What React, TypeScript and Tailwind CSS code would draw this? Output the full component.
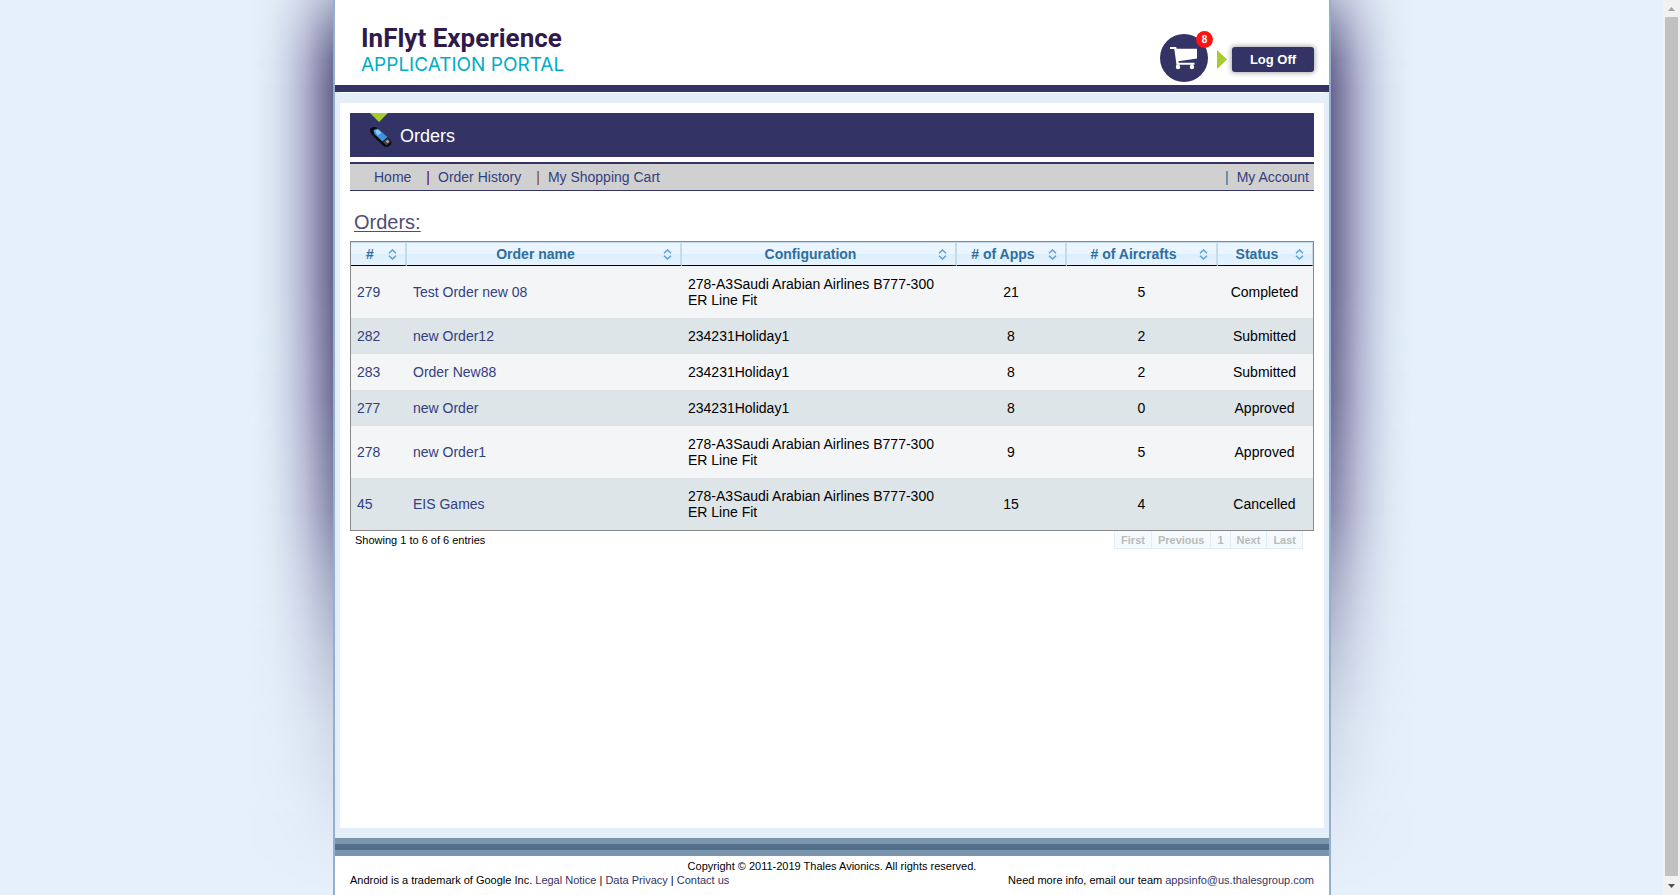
import React from "react";

type Order = { id: string; name: string; config: string; apps: number; aircrafts: number; status: string };

const LONG = "278-A3Saudi Arabian Airlines B777-300 ER Line Fit";
const SHORT = "234231Holiday1";

const orders: Order[] = [
  { id: "279", name: "Test Order new 08", config: LONG, apps: 21, aircrafts: 5, status: "Completed" },
  { id: "282", name: "new Order12", config: SHORT, apps: 8, aircrafts: 2, status: "Submitted" },
  { id: "283", name: "Order New88", config: SHORT, apps: 8, aircrafts: 2, status: "Submitted" },
  { id: "277", name: "new Order", config: SHORT, apps: 8, aircrafts: 0, status: "Approved" },
  { id: "278", name: "new Order1", config: LONG, apps: 9, aircrafts: 5, status: "Approved" },
  { id: "45", name: "EIS Games", config: LONG, apps: 15, aircrafts: 4, status: "Cancelled" },
];

const columns = [
  { label: "#", width: "w-[56px]" },
  { label: "Order name", width: "" },
  { label: "Configuration", width: "" },
  { label: "# of Apps", width: "w-[110px]" },
  { label: "# of Aircrafts", width: "w-[151px]" },
  { label: "Status", width: "w-[95px]" },
];

function SortIcon() {
  return (
    <svg width="9" height="11" viewBox="0 0 9 11" fill="none" stroke="#5d9fd6" strokeWidth="1.5" aria-hidden="true">
      <path d="M1 4.2 4.5 1 8 4.2M1 6.8 4.5 10 8 6.8" />
    </svg>
  );
}

function CartIcon() {
  return (
    <svg width="28" height="24" viewBox="0 0 28 24" aria-hidden="true">
      <path d="M0 1H6.200L6.700 2.800H27V12.600L8.300 15.200L8.700 16.800H24.500V18.800H6.500L4.300 3H0Z" fill="#fff" />
      <path d="M6.500 18.500H9V20H6.500ZM20.500 18.500H23V20H20.500Z" fill="#fff" />
      <circle cx="8" cy="21" r="2.200" fill="#fff" />
      <circle cx="22" cy="21" r="2.200" fill="#fff" />
    </svg>
  );
}

function PhoneIcon() {
  return (
    <svg className="mt-[2px]" width="24" height="22" viewBox="0 0 24 22" aria-hidden="true">
      <path d="M1 3.500Q1 1 6 1L9 2 22.500 15.500Q23 19 18 21L15 20.500 2 8Z" fill="#0b0b12" />
      <path d="M4.500 4 9 2.500 18.500 11 13.500 15.500 5.500 8Z" fill="#3f93dc" />
      <path d="M6 4.500 9 3.800 12.500 7 8.500 9.500Z" fill="#8accff" />
      <path d="M14 16 18.500 12 21.500 15.800 17.500 19.500Z" fill="#44444c" />
      <circle cx="18.500" cy="15.500" r="1.300" fill="#b9b9c0" />
    </svg>
  );
}

function Glow({ side }: { side: string }) {
  return (
    <div
      aria-hidden="true"
      className={
        side +
        " absolute top-0 h-[895px] w-[82px] [mask-image:linear-gradient(to_bottom,rgba(0,0,0,.42)_0,rgba(0,0,0,.7)_30px,rgba(0,0,0,.92)_60px,black_90px,black_280px,rgba(0,0,0,.92)_400px,rgba(0,0,0,.74)_510px,rgba(0,0,0,.5)_580px,rgba(0,0,0,.32)_650px,rgba(0,0,0,.17)_720px,rgba(0,0,0,.05)_820px,transparent_890px)]"
      }
    />
  );
}

export default function App() {
  return (
    <div className="flex h-screen overflow-hidden bg-[#e5f0fa] font-['Liberation_Sans',Arial,sans-serif] text-black">
      <div className="flex min-w-0 flex-1 justify-center pl-px">
        <div className="relative flex w-full max-w-[998px] flex-col">
          <Glow side="right-full bg-[linear-gradient(to_left,#67668f_0,#8b8aae_14px,#afb0cd_28px,#c8d0e4_44px,#dae5f1_60px,#e5f0fa_82px)]" />
          <Glow side="left-full bg-[linear-gradient(to_right,#67668f_0,#8b8aae_14px,#afb0cd_28px,#c8d0e4_44px,#dae5f1_60px,#e5f0fa_82px)]" />
          <div className="flex flex-1 flex-col border-x-2 border-[#92afce] bg-[#e4eef9]">
            <header className="flex h-[92px] justify-between border-b-[7px] border-[#333366] bg-white pr-[15px] pl-[26px]">
              <div className="pt-[23px] whitespace-nowrap">
                <div className="font-[Roboto,sans-serif] text-[26px] leading-[30px] font-bold text-[#2f1a4a]">InFlyt Experience</div>
                <div className="font-[Inter,sans-serif] text-[19px] leading-[24px] font-normal text-[#00adc6]">APPLICATION PORTAL</div>
              </div>
              <div className="flex items-start pt-[34px]">
                <a href="#cart" aria-label="Shopping cart" className="relative flex size-12 items-center justify-center rounded-full bg-[#333366]">
                  <CartIcon />
                  <span className="absolute -top-[3px] -right-[5px] flex size-[17px] items-center justify-center rounded-full bg-[#ff1414] text-[10px] font-bold text-white">8</span>
                </a>
                <svg className="mt-4 ml-[9px]" width="10" height="19" viewBox="0 0 10 19" aria-hidden="true">
                  <path d="M0 0 10 9.500 0 19Z" fill="#a5cb2c" />
                </svg>
                <button className="mt-[13px] ml-[5px] h-[25px] w-[82px] rounded-[3px] bg-[#333366] text-[13px] font-bold text-white shadow-[0_0_5px_1px_#aaa]">Log Off</button>
              </div>
            </header>

            <div className="mx-[5px] h-px bg-white" />
            <main className="mx-[5px] mt-[10px] mb-[10px] flex-1 bg-white px-[10px] pt-[10px]">
              <div className="relative flex h-[44px] items-center bg-[#333366] pt-[2px] pl-[19px] text-white">
                <svg className="absolute top-0 left-[20px]" width="18" height="9" viewBox="0 0 18 9" aria-hidden="true">
                  <path d="M0 0H18L9 9Z" fill="#a5cb2c" />
                </svg>
                <PhoneIcon />
                <h1 className="ml-[7px] text-[18px] leading-[20px]">Orders</h1>
              </div>

              <nav className="mt-[5px] flex h-[29px] items-center border-t-2 border-b border-[#333366] bg-[#d0d0d0] pr-[5px] pl-[24px] text-[14px] text-[#334080]">
                <a href="#home">Home</a>
                <span className="ml-[15px] text-[#660033]">|</span>
                <a href="#history" className="ml-[8px]">Order History</a>
                <span className="ml-[15px] text-[#884400]">|</span>
                <a href="#shopping" className="ml-[8px]">My Shopping Cart</a>
                <span className="ml-auto text-[#007799]">|</span>
                <a href="#account" className="ml-[8px]">My Account</a>
              </nav>

              <h2 className="mt-[20px] pl-[4px] text-[20px] leading-[22px] text-[#4f4d75] underline decoration-1 underline-offset-2">Orders:</h2>

              <table className="mt-[8px] w-full table-fixed border-separate border-spacing-0 border border-[#888] text-[14px] leading-[16px]">
                <thead>
                  <tr>
                    {columns.map((c) => (
                      <th key={c.label} className={c.width + " h-[24px] border-t border-r-2 border-b border-t-[#c5dbec] border-r-[#c5dbec] border-b-black bg-[linear-gradient(#eaf5ff_50%,#dceefc_50%,#e6f3fe)] p-0 text-[#2e6e9e] last:border-r"}>
                        <button className="flex w-full items-center pr-[8px] font-bold">
                          <span className="flex-1 pl-px text-center whitespace-nowrap">{c.label}</span>
                          <SortIcon />
                        </button>
                      </th>
                    ))}
                  </tr>
                </thead>
                <tbody>
                  {orders.map((o) => (
                    <tr key={o.id} className="bg-[#f3f5f7] even:bg-[#dde5e8]">
                      <td className="px-[6px] py-[10px] text-[#334080]"><a href={"#order-" + o.id}>{o.id}</a></td>
                      <td className="px-[6px] py-[10px] text-[#334080]"><a href={"#order-" + o.id}>{o.name}</a></td>
                      <td className="px-[6px] py-[10px]">{o.config}</td>
                      <td className="pr-[2px] text-center">{o.apps}</td>
                      <td className="pr-[2px] text-center">{o.aircrafts}</td>
                      <td className="pr-[2px] text-center">{o.status}</td>
                    </tr>
                  ))}
                </tbody>
              </table>

              <div className="flex justify-between pr-[11px] pl-[5px] text-[11px] leading-[16px]">
                <p className="pt-px">Showing 1 to 6 of 6 entries</p>
                <div className="flex border-r border-[#e2eef7] font-bold text-[#bbb]">
                  {["First", "Previous", "1", "Next", "Last"].map((p) => (
                    <button key={p} disabled className="border-b border-l border-[#e2eef7] bg-[#f5fafe] px-[6px] pt-px">{p}</button>
                  ))}
                </div>
              </div>
            </main>

            <div className="h-[18px] border-y-[6px] border-[#7b95ad] bg-[#526f8b]" />
            <footer className="h-[39px] bg-white px-[15px] pt-[3px] text-[11px] leading-[14px]">
              <p className="text-center">Copyright © 2011-2019 Thales Avionics. All rights reserved.</p>
              <div className="flex justify-between">
                <p>
                  Android is a trademark of Google Inc. <a href="#legal" className="text-[#333366]">Legal Notice</a> | <a href="#privacy" className="text-[#333366]">Data Privacy</a> | <a href="#contact" className="text-[#333366]">Contact us</a>
                </p>
                <p>
                  Need more info, email our team <a href="mailto:appsinfo@us.thalesgroup.com" className="text-[#333366]">appsinfo@us.thalesgroup.com</a>
                </p>
              </div>
            </footer>
          </div>
        </div>
      </div>

      <div aria-hidden="true" className="flex w-[17px] flex-col items-center justify-between bg-[#f1f1f1]">
        <svg width="17" height="17" viewBox="0 0 17 17"><path d="M5 11 8.500 7 12 11Z" fill="#a3a3a3" /></svg>
        <div className="w-[13px] flex-1 bg-[#c1c1c1]" />
        <svg width="17" height="19" viewBox="0 0 17 19"><path d="M5 8 8.500 12 12 8Z" fill="#505050" /></svg>
      </div>
    </div>
  );
}
